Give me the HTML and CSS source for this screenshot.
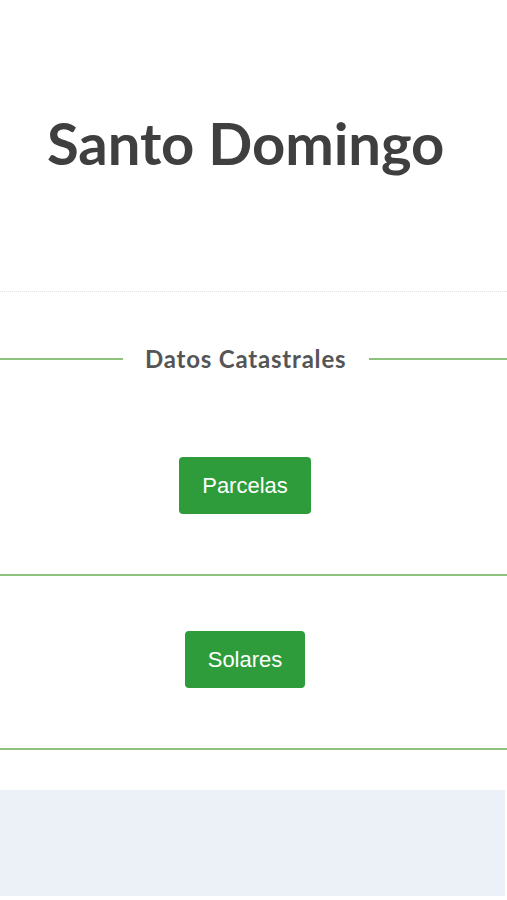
FILE: index.html
```html
<!DOCTYPE html>
<html lang="es">
<head>
<meta charset="utf-8">
<title>Santo Domingo</title>
<link rel="stylesheet" href="styles.css">
</head>
<body>
<header class="hero">
  <h1 class="title">Santo Domingo</h1>
</header>
<main class="content">
  <div class="section-heading">
    <span class="line line-left"></span>
    <h2 class="heading-text">Datos Catastrales</h2>
    <span class="line line-right"></span>
  </div>
  <div class="row row-first">
    <a class="btn" href="#">Parcelas</a>
  </div>
  <div class="row">
    <a class="btn" href="#">Solares</a>
  </div>
  <div class="panel"></div>
</main>
</body>
</html>
```
FILE: styles.css
```css
* { box-sizing: border-box; }
html, body { margin: 0; padding: 0; background: #ffffff; }
body { font-family: "Lato", "Liberation Sans", sans-serif; color: #3f3f3f; }

.hero {
  height: 292px;
  padding: 108px 0 0 47px;
  border-bottom: 1px dotted #e4e4e4;
}
.title {
  margin: 0;
  font-size: 58px;
  line-height: 70px;
  font-weight: 700;
  color: #3f3f3f;
  letter-spacing: -0.1px;
}

.section-heading {
  display: flex;
  align-items: center;
  margin-top: 52px;
  height: 30px;
}
.line { height: 2px; background: #8cc27c; }
.line-left { width: 123px; }
.line-right { flex: 1; }
.heading-text {
  margin: 0 23px 0 22px;
  font-size: 24px;
  line-height: 30px;
  font-weight: 700;
  letter-spacing: 0.8px;
  color: #555555;
  white-space: nowrap;
}

.row {
  display: flex;
  justify-content: center;
  padding: 55px 17px 60px 0;
  border-bottom: 2px solid #8cc27c;
}
.row-first { padding-top: 83px; }

.btn {
  display: inline-block;
  font-family: "Liberation Sans", Arial, sans-serif;
  font-size: 22px;
  line-height: 23px;
  padding: 17px 23px;
  color: #ffffff;
  background: #2e9c3a;
  border-radius: 4px;
  text-decoration: none;
}

.panel {
  margin-top: 40px;
  width: 505px;
  height: 106px;
  background: #ecf1f7;
}
```
